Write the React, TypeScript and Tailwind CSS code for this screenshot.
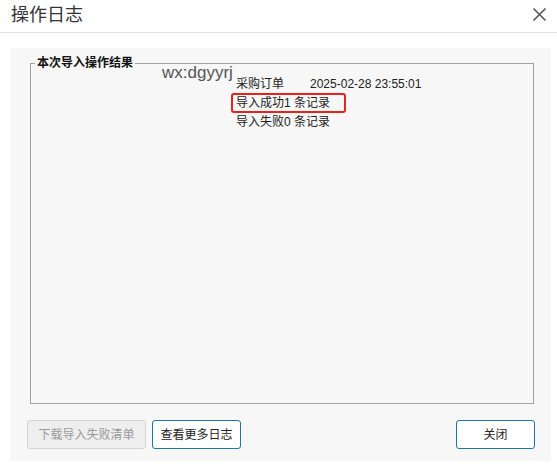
import React from "react";

const font = "font-['Liberation_Sans','Noto_Sans_CJK_SC',sans-serif]";

function CloseIcon() {
  return (
    <svg width="15" height="15" viewBox="0 0 15 15" className="block">
      <path d="M1.5 1.5 L13.5 13.5 M13.5 1.5 L1.5 13.5" stroke="#555" strokeWidth="1.6" fill="none" />
    </svg>
  );
}

export default function App() {
  return (
    <div className={`w-[557px] h-[466px] bg-white ${font} text-[#333]`}>
      {/* header */}
      <div className="h-[33px] flex items-center justify-between pl-[11px] pr-[9px] border-b border-[#e0e0e0]">
        <span className="text-[18px] leading-[30px] text-[#333] -mt-[2px]">操作日志</span>
        <button className="-mt-[4px] pr-[1px]">
          <CloseIcon />
        </button>
      </div>

      {/* body */}
      <div className="mt-[15px] mx-[10px] w-[541px] h-[413px] bg-[#f7f7f7] pt-[7px] pl-[20px] pr-[17px]">
        <fieldset className="relative h-[349px] border border-[#a3a3a3]">
          <legend className="ml-[4px] px-[2px] text-[12px] leading-[16px] font-bold text-[#111]">
            本次导入操作结果
          </legend>
          <span className="absolute left-[131px] -top-[8px] text-[17px] leading-[20px] text-[#555]">
            wx:dgyyrj
          </span>
          <div className="pl-[205px] pt-[5px] text-[12px] text-[#222]">
            <div className="leading-[17px] flex">
              <span>采购订单</span>
              <span className="ml-[26px]">2025-02-28 23:55:01</span>
            </div>
            <div className="leading-[16px]">
              <span className="inline-block -ml-[5px] pl-[3px] pr-[14px] border-2 border-[#e8231e] rounded-[3px]">
                导入成功1 条记录
              </span>
            </div>
            <div className="leading-[18px]">导入失败0 条记录</div>
          </div>
        </fieldset>

        <div className="mt-[16px] flex items-center -ml-[3px] -mr-[1px]">
          <button
            disabled
            className="w-[119px] h-[29px] rounded-[3px] border border-[#d4d4d4] bg-[#eeeeee] text-[12px] text-[#9a9a9a]"
          >
            下载导入失败清单
          </button>
          <button className="ml-[6px] w-[89px] h-[29px] rounded-[3px] border border-[#1c78a3] bg-white text-[12px] text-[#222]">
            查看更多日志
          </button>
          <button className="ml-auto w-[79px] h-[29px] rounded-[3px] border border-[#1c78a3] bg-white text-[12px] text-[#222]">
            关闭
          </button>
        </div>
      </div>
    </div>
  );
}
